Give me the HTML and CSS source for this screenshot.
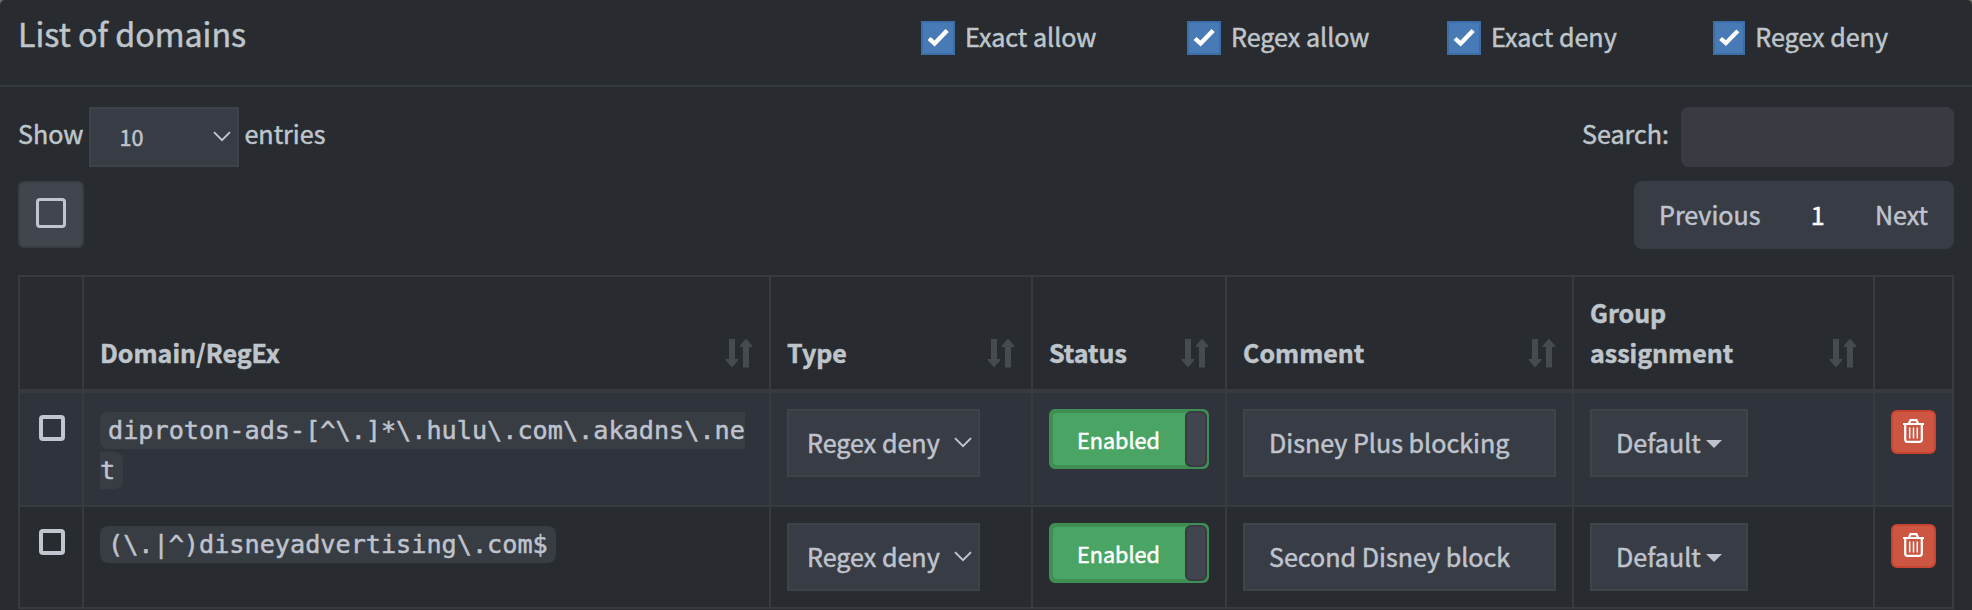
FILE: index.html
```html
<!DOCTYPE html>
<html lang="en">
<head>
<meta charset="utf-8">
<title>List of domains</title>
<link rel="stylesheet" href="styles.css">
</head>
<body>
<svg width="0" height="0" class="sprite" aria-hidden="true">
  <symbol id="check" viewBox="0 0 34 34"><path d="M6.5 19 9.5 16 13.5 19.500 24.500 8 27.800 11 13.700 25.500Z" fill="#fff"/></symbol>
  <symbol id="chevron" viewBox="0 0 18 11"><path d="M1 1.200 9 9.200 17 1.200" fill="none" stroke="#c3c7d0" stroke-width="1.900"/></symbol>
  <symbol id="sort" viewBox="0 0 28 30"><path d="M4 1h6v20h3.200l.3 1L7 29.500.5 22l.3-1H4ZM18 29.500h6V9h3.200l.3-1L21 .5 14.500 8l.3 1H18Z" fill="#464b4f"/></symbol>
  <symbol id="trash" viewBox="0 0 21 24"><path d="M0 5h21M6 4.500 7.500 1.200h6L15 4.500M2.200 5v15.500q0 2.300 2.300 2.300h12q2.300 0 2.300-2.300V5" fill="none" stroke="#fff" stroke-width="2.200"/><path d="M6.700 8.500v11M10.500 8.500v11M14.300 8.500v11" stroke="#fff" stroke-width="1.500"/></symbol>
</svg>
<section class="box">
  <header class="box-header">
    <h3 class="title">List of domains</h3>
    <div class="filters">
      <label class="filter"><svg class="tick"><use href="#check"/></svg>Exact allow</label>
      <label class="filter"><svg class="tick"><use href="#check"/></svg>Regex allow</label>
      <label class="filter"><svg class="tick"><use href="#check"/></svg>Exact deny</label>
      <label class="filter"><svg class="tick"><use href="#check"/></svg>Regex deny</label>
    </div>
  </header>
  <div class="toolbar">
    <div class="length"><span>Show</span><span class="select length-select">10<svg class="chevron"><use href="#chevron"/></svg></span><span>entries</span></div>
    <div class="search"><span>Search:</span><span class="search-input"></span></div>
  </div>
  <div class="toolbar actions">
    <span class="select-all"><span class="select-all-icon"></span></span>
    <nav class="pager"><span>Previous</span><span class="current">1</span><span>Next</span></nav>
  </div>
  <div class="table">
    <div class="row head">
      <div class="cell"></div>
      <div class="cell">Domain/RegEx<svg class="sort"><use href="#sort"/></svg></div>
      <div class="cell">Type<svg class="sort"><use href="#sort"/></svg></div>
      <div class="cell">Status<svg class="sort"><use href="#sort"/></svg></div>
      <div class="cell">Comment<svg class="sort"><use href="#sort"/></svg></div>
      <div class="cell"><span>Group<br>assignment</span><svg class="sort"><use href="#sort"/></svg></div>
      <div class="cell"></div>
    </div>
    <div class="row first">
      <div class="cell pick"><span class="checkbox"></span></div>
      <div class="cell domain"><code>diproton-ads-[^\.]*\.hulu\.com\.akadns\.net</code></div>
      <div class="cell"><span class="select type-select">Regex deny<svg class="chevron"><use href="#chevron"/></svg></span></div>
      <div class="cell"><span class="toggle"><span class="toggle-on">Enabled</span><span class="handle"></span></span></div>
      <div class="cell"><span class="comment">Disney Plus blocking</span></div>
      <div class="cell"><span class="group">Default<i class="caret"></i></span></div>
      <div class="cell"><span class="delete"><svg class="trash"><use href="#trash"/></svg></span></div>
    </div>
    <div class="row second">
      <div class="cell pick"><span class="checkbox"></span></div>
      <div class="cell domain"><code>(\.|^)disneyadvertising\.com$</code></div>
      <div class="cell"><span class="select type-select">Regex deny<svg class="chevron"><use href="#chevron"/></svg></span></div>
      <div class="cell"><span class="toggle"><span class="toggle-on">Enabled</span><span class="handle"></span></span></div>
      <div class="cell"><span class="comment">Second Disney block</span></div>
      <div class="cell"><span class="group">Default<i class="caret"></i></span></div>
      <div class="cell"><span class="delete"><svg class="trash"><use href="#trash"/></svg></span></div>
    </div>
  </div>
</section>
</body>
</html>
```
FILE: styles.css
```css
* { box-sizing: border-box; }
body {
  margin: 0;
  height: 610px;
  overflow: hidden;
  background: #6b6d6c;
  font: 25.1px/40px "Noto Sans CJK SC", "Noto Sans", sans-serif;
  color: #bec5cb;
  -webkit-text-stroke: 0.5px currentColor;
}
.sprite { position: absolute; }
.box {
  height: 620px;
  background: #282b2f;
  border-radius: 5px 5px 0 0;
}
.box-header {
  display: flex;
  justify-content: space-between;
  height: 87px;
  padding: 0 84px 0 18px;
  border-bottom: 2px solid #353a40;
}
.title {
  margin: 0;
  padding-top: 13px;
  font-size: 32.2px;
  font-weight: 400;
  line-height: 40px;
}
.filters {
  display: grid;
  grid-template-columns: 266px 260px 266px 175px;
  padding-top: 16px;
}
.filter {
  display: flex;
  align-items: flex-start;
  gap: 10px;
  white-space: nowrap;
}
.tick {
  width: 34px;
  height: 34px;
  margin-top: 5px;
  background: #487bb5;
  box-shadow: inset 0 0 0 2px #3c6da6;
}
.toolbar {
  display: flex;
  justify-content: space-between;
  padding: 20px 18px 0;
}
.length, .search { display: flex; line-height: 53px; }
.select {
  display: flex;
  align-items: center;
  justify-content: space-between;
  background: #383c44;
  border: 2px solid #3d4349;
  color: #bfc3cd;
}
.length-select {
  width: 150px;
  height: 60px;
  margin: 0 5px 0 6px;
  padding: 0 6px 1px 28px;
  font-size: 21.6px;
}
.chevron { width: 18px; height: 11px; }
.search-input {
  width: 273px;
  height: 60px;
  margin-left: 12px;
  background: #383c42;
  border-radius: 8px;
}
.actions { padding-top: 14px; }
.select-all {
  display: flex;
  justify-content: center;
  width: 66px;
  height: 67px;
  padding-top: 15px;
  background: #41454d;
  border: 2px solid #3a3e44;
  border-radius: 6px;
}
.select-all-icon {
  width: 30px;
  height: 30px;
  border: 3px solid #c0c4ce;
  border-radius: 4px;
}
.pager {
  display: flex;
  justify-content: space-between;
  width: 320px;
  height: 68px;
  padding: 0 26px 0 25px;
  line-height: 66px;
  background: #383c44;
  border-radius: 8px;
  color: #bfc3cd;
}
.current { color: #fff; }
.table {
  margin: 26px 18px 0;
  border: 2px solid #373b40;
  border-width: 2px 0 0 2px;
}
.row {
  display: grid;
  grid-template-columns: 64px 687px 262px 194px 347px 301px 79px;
}
.cell {
  padding: 16px 16px 0;
  border-right: 2px solid #373b40;
  border-bottom: 2px solid #373b40;
}
.head { height: 116px; font-size: 25px; font-weight: 700; }
.head .cell {
  display: flex;
  align-items: flex-end;
  justify-content: space-between;
  padding-top: 0;
  padding-bottom: 17px;
  border-bottom-width: 4px;
}
.sort { width: 28px; height: 30px; margin-bottom: 4px; }
.first { height: 114px; background: #2f333b; }
.second { height: 102px; }
.pick { padding: 22px 0 0 19px; }
.checkbox {
  display: block;
  width: 26px;
  height: 26px;
  border: 4px solid #c1c5cd;
  border-radius: 4px;
}
.domain {
  padding-top: 18px;
  word-break: break-all;
  font: 25.2px/40px "DejaVu Sans Mono", monospace;
}
code {
  padding: 4px 8px;
  font: inherit;
  color: #bfc3cd;
  background: #383c43;
  border-radius: 8px;
}
.type-select { width: 193px; height: 68px; padding: 0 6px 2px 18px; }
.toggle {
  display: flex;
  width: 160px;
  height: 60px;
  border: 2px solid #3f8f55;
  border-radius: 6px;
  background: #3f8f55;
}
.toggle-on {
  flex: 1;
  margin: 2px 0 2px 2px;
  padding-left: 24px;
  border-radius: 4px 0 0 4px;
  background: #4aa564;
  color: #fff;
  font-size: 21.6px;
  line-height: 54px;
  height: 52px;
}
.handle {
  width: 22px;
  background: #42454d;
  border: 2px solid #383c42;
  border-radius: 6px;
}
.comment, .group {
  display: flex;
  align-items: center;
  height: 68px;
  padding: 0 0 2px 24px;
  background: #383c44;
  border: 2px solid #3f4449;
  color: #bfc3cd;
}
.group { width: 158px; }
.caret {
  margin: 4px 0 0 5px;
  border: 8px solid transparent;
  border-top-color: #bfc3cd;
  border-bottom: 0;
}
.delete {
  display: flex;
  justify-content: center;
  width: 45px;
  height: 44px;
  margin-top: 1px;
  padding-top: 7px;
  background: #cd5642;
  border: 2px solid #c64530;
  border-radius: 6px;
}
.trash { width: 21px; height: 24px; }
```
